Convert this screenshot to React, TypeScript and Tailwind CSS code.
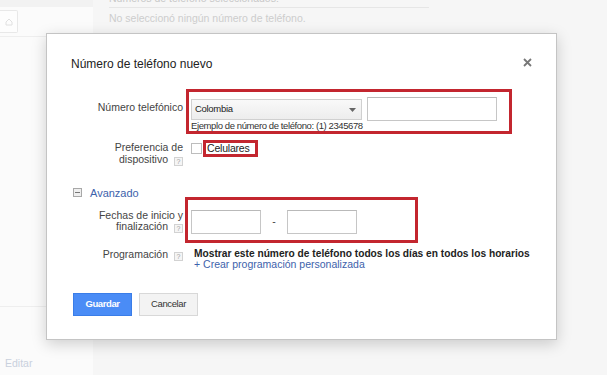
const font = "font-['Liberation_Sans',Arial,sans-serif]";

function Help() {
  return (
    <span className="ml-[6px] inline-flex h-[9px] w-[9px] items-center justify-center border border-[#d2d2d2] bg-[#f5f5f5] align-[-1px] text-[7px] leading-none text-[#a0a0a0]">
      ?
    </span>
  );
}

function Dialog() {
  return (
    <div className="absolute left-[46px] top-[33px] h-[307px] w-[511px] border border-[#c4c4c4] bg-white pl-[24px] pt-[22px] shadow-[0_4px_14px_rgba(0,0,0,0.18)]">
      {/* title */}
      <div className="flex h-[16px] items-center justify-between pr-[24px]">
        <h2 className="text-[12px] leading-[16px] text-[#222]">Número de teléfono nuevo</h2>
        <svg width="9" height="9" viewBox="0 0 9 9" className="mb-[3px]">
          <path d="M1 1L8 8M8 1L1 8" stroke="#777" strokeWidth="1.8" />
        </svg>
      </div>

      {/* phone number */}
      <div className="mt-[25px] flex">
        <div className="w-[112px] shrink-0 pt-[4px] text-right text-[10.5px] leading-[12px] text-[#444]">
          Número telefónico
        </div>
        <div className="ml-[8px]">
          <div className="flex items-start gap-[5px]">
            <div className="mt-[2px] flex h-[21px] w-[171px] items-center justify-between border border-[#d0d0d0] bg-gradient-to-b from-[#f9f9f9] to-[#ededed] pl-[3px] pr-[5px]">
              <span className="text-[9.5px] tracking-[-0.3px] text-[#222]">Colombia</span>
              <svg width="7" height="4" viewBox="0 0 7 4">
                <path d="M0 0H7L3.5 4Z" fill="#666" />
              </svg>
            </div>
            <div className="h-[24px] w-[130px] border border-[#c6c6c6] border-t-[#b9b9b9] bg-white" />
          </div>
          <div className="text-[9.5px] leading-[9px] tracking-[-0.4px] text-[#333]">
            Ejemplo de número de teléfono: (1) 2345678
          </div>
        </div>
      </div>

      {/* device preference */}
      <div className="mt-[12px] flex">
        <div className="w-[112px] shrink-0 text-right text-[10.5px] leading-[11.5px] text-[#444]">
          Preferencia de
          <br />
          dispositivo
          <Help />
        </div>
        <div className="ml-[8px] flex items-start gap-[5px]">
          <span className="mt-[1px] h-[11px] w-[11px] border border-[#bdbdbd] bg-white" />
          <span className="text-[10.5px] leading-[12px] tracking-[-0.2px] text-[#222]">Celulares</span>
        </div>
      </div>

      {/* advanced */}
      <div className="mt-[21px] flex h-[12px] items-center gap-[8px] pl-[2px]">
        <span className="flex h-[9px] w-[9px] items-center justify-center border border-[#a8a8a8] bg-[#efefef]">
          <span className="h-[1px] w-[5px] bg-[#777]" />
        </span>
        <span className="text-[11px] leading-[12px] text-[#3d62ab]">Avanzado</span>
      </div>

      {/* dates */}
      <div className="mt-[11px] flex">
        <div className="w-[112px] shrink-0 text-right text-[10.5px] leading-[11.5px] text-[#444]">
          Fechas de inicio y
          <br />
          finalización
          <Help />
        </div>
        <div className="ml-[8px] flex items-center">
          <div className="h-[24px] w-[70px] border border-[#c6c6c6] border-t-[#b9b9b9] bg-white" />
          <span className="w-[26px] text-center text-[10.5px] text-[#444]">-</span>
          <div className="h-[24px] w-[70px] border border-[#c6c6c6] border-t-[#b9b9b9] bg-white" />
        </div>
      </div>

      {/* schedule */}
      <div className="mt-[14px] flex">
        <div className="w-[112px] shrink-0 text-right text-[10.5px] leading-[12px] text-[#444]">
          Programación
          <Help />
        </div>
        <div className="ml-[11px] pt-[0.5px]">
          <div className="text-[10.2px] font-bold leading-[11px] text-[#222]">
            Mostrar este número de teléfono todos los días en todos los horarios
          </div>
          <div className="text-[10.5px] leading-[11px] text-[#3d62ab]">+ Crear programación personalizada</div>
        </div>
      </div>

      {/* buttons */}
      <div className="mt-[23px] flex gap-[7px] pl-[2px]">
        <button className="flex h-[23px] w-[59px] items-center justify-center border border-[#3a7de8] bg-[#4a8cf6] text-[9.5px] font-bold tracking-[-0.4px] text-white">
          Guardar
        </button>
        <button className="flex h-[23px] w-[59px] items-center justify-center border border-[#d8d8d8] bg-[#f3f3f3] text-[9.5px] tracking-[-0.4px] text-[#333]">
          Cancelar
        </button>
      </div>

      {/* annotation boxes */}
      <div className="pointer-events-none absolute left-[139px] top-[55px] h-[45px] w-[326px] border-[3px] border-[#c3262f]" />
      <div className="pointer-events-none absolute left-[156px] top-[106px] h-[17px] w-[55px] border-[3px] border-[#c3262f]" />
      <div className="pointer-events-none absolute left-[138px] top-[163px] h-[46px] w-[233px] border-[3px] border-[#c3262f]" />
    </div>
  );
}

export default function App() {
  return (
    <div className={`${font} relative flex h-[375px] w-[607px] overflow-hidden bg-[#f6f6f6]`}>
      {/* left column */}
      <aside className="flex w-[93px] shrink-0 flex-col bg-[#fbfbfb]">
        <div className="h-[7px] bg-[#f2f2f2]" />
        <div className="mt-[3px] flex h-[23px] w-[18px] items-center justify-center rounded-r-[2px] border border-l-0 border-[#e8e8e8] bg-[#fdfdfd]">
          <svg width="8" height="8" viewBox="0 0 8 8">
            <path d="M1 4L4 1L7 4V7H1Z" fill="none" stroke="#e0e0e0" strokeWidth="1" />
          </svg>
        </div>
        <div className="mt-[3px] border-t border-[#eeeeee]" />
        <div className="mt-[269px] border-t border-[#eeeeee]" />
        <div className="mt-[49px] pl-[5px] text-[10.5px] text-[#c9d0dd]">Editar</div>
      </aside>

      {/* main area */}
      <main className="flex-1 pl-[16px]">
        <div className="mt-[-8px] w-[320px] border-b border-[#e6e6e6] pb-[2px] text-[10.5px] leading-[13px] text-[#c8c8c8]">
          Números de teléfono seleccionados:
        </div>
        <div className="mt-[4px] text-[10.5px] leading-[12px] text-[#cdcdcd]">
          No seleccionó ningún número de teléfono.
        </div>
      </main>

      <Dialog />
    </div>
  );
}
